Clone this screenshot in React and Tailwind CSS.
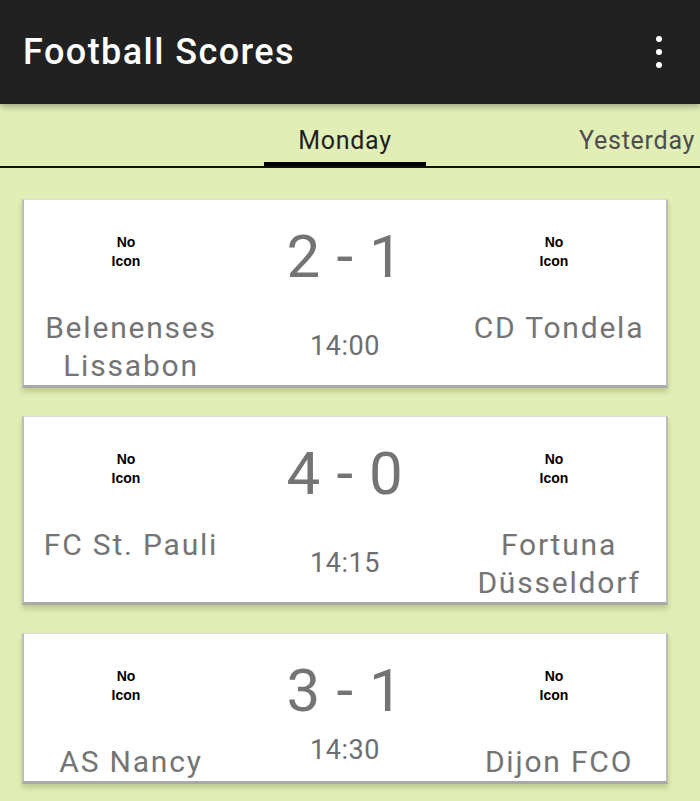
import React from "react";

const matches = [
  { home: "Belenenses Lissabon", away: "CD Tondela", score: "2 - 1", time: "14:00" },
  { home: "FC St. Pauli", away: "Fortuna Düsseldorf", score: "4 - 0", time: "14:15" },
  { home: "AS Nancy", away: "Dijon FCO", score: "3 - 1", time: "14:30" },
];

const roboto = { fontFamily: "Roboto, 'Noto Sans', sans-serif" };

function NoIcon() {
  return (
    <div
      className="text-center text-[14px] leading-[19px] font-bold text-black"
      style={{ fontFamily: "'Liberation Sans', Arial, sans-serif" }}
    >
      No
      <br />
      Icon
    </div>
  );
}

function Team({ name }) {
  return (
    <div className="flex flex-col items-center">
      <div className="h-[109px] w-full flex items-center justify-center pb-[6px] pr-[10px]">
        <NoIcon />
      </div>
      <div className="w-full text-center text-[30px] leading-[38px] tracking-[0.06em] text-[#747474]">
        {name}
      </div>
    </div>
  );
}

function MatchCard({ m }) {
  return (
    <div className="bg-white border-x-2 border-t border-b-[3px] border-t-[#dcdcdc] border-x-[#bcbcbc] border-b-[#a9a9a9] shadow-[0_4px_5px_rgba(90,100,40,0.25)]">
      <div className="grid grid-cols-3">
        <Team name={m.home} />
        <div className="flex flex-col items-center">
          <div className="flex-[11] basis-0 w-full flex justify-center pt-[27px]">
            <div className="text-[60px] leading-none tracking-[0.01em] text-[#747474]">{m.score}</div>
          </div>
          <div className="flex-[9] basis-0 w-full flex items-center justify-center pb-[4px]">
            <div className="text-[27px] leading-none tracking-[0.02em] text-[#6e6e6e]">{m.time}</div>
          </div>
        </div>
        <Team name={m.away} />
      </div>
    </div>
  );
}

export default function App() {
  return (
    <div className="w-[700px] h-[801px] overflow-hidden bg-[#e1eeb6]" style={roboto}>
      <header className="relative z-10 h-[104px] bg-[#212121] flex items-center justify-between pl-[23px] pr-[38px] shadow-[0_3px_6px_rgba(0,0,0,0.28)]">
        <h1 className="text-white text-[36px] font-medium tracking-[0.04em] leading-none">Football Scores</h1>
        <div className="flex flex-col items-center gap-[7px]">
          <span className="w-[6px] h-[6px] rounded-full bg-white" />
          <span className="w-[6px] h-[6px] rounded-full bg-white" />
          <span className="w-[6px] h-[6px] rounded-full bg-white" />
        </div>
      </header>

      <nav className="h-[64px] border-b-2 border-[#111] flex items-stretch whitespace-nowrap">
        <div className="w-[264px] shrink-0" />
        <div className="w-[162px] shrink-0 flex flex-col">
          <div className="flex-1 flex items-center justify-center pt-[16px] text-[25px] tracking-[0.03em] text-[#1f1f1f]">
            Monday
          </div>
          <div className="h-[4px] bg-black" />
        </div>
        <div className="w-[153px] shrink-0" />
        <div className="flex items-center pt-[12px] text-[25px] tracking-[0.03em] text-[#4d4d4d]">
          Yesterday
        </div>
      </nav>

      <main className="pl-[22px] pr-[32px] pt-[31px] flex flex-col gap-[28px]">
        {matches.map((m) => (
          <MatchCard key={m.home} m={m} />
        ))}
      </main>
    </div>
  );
}
